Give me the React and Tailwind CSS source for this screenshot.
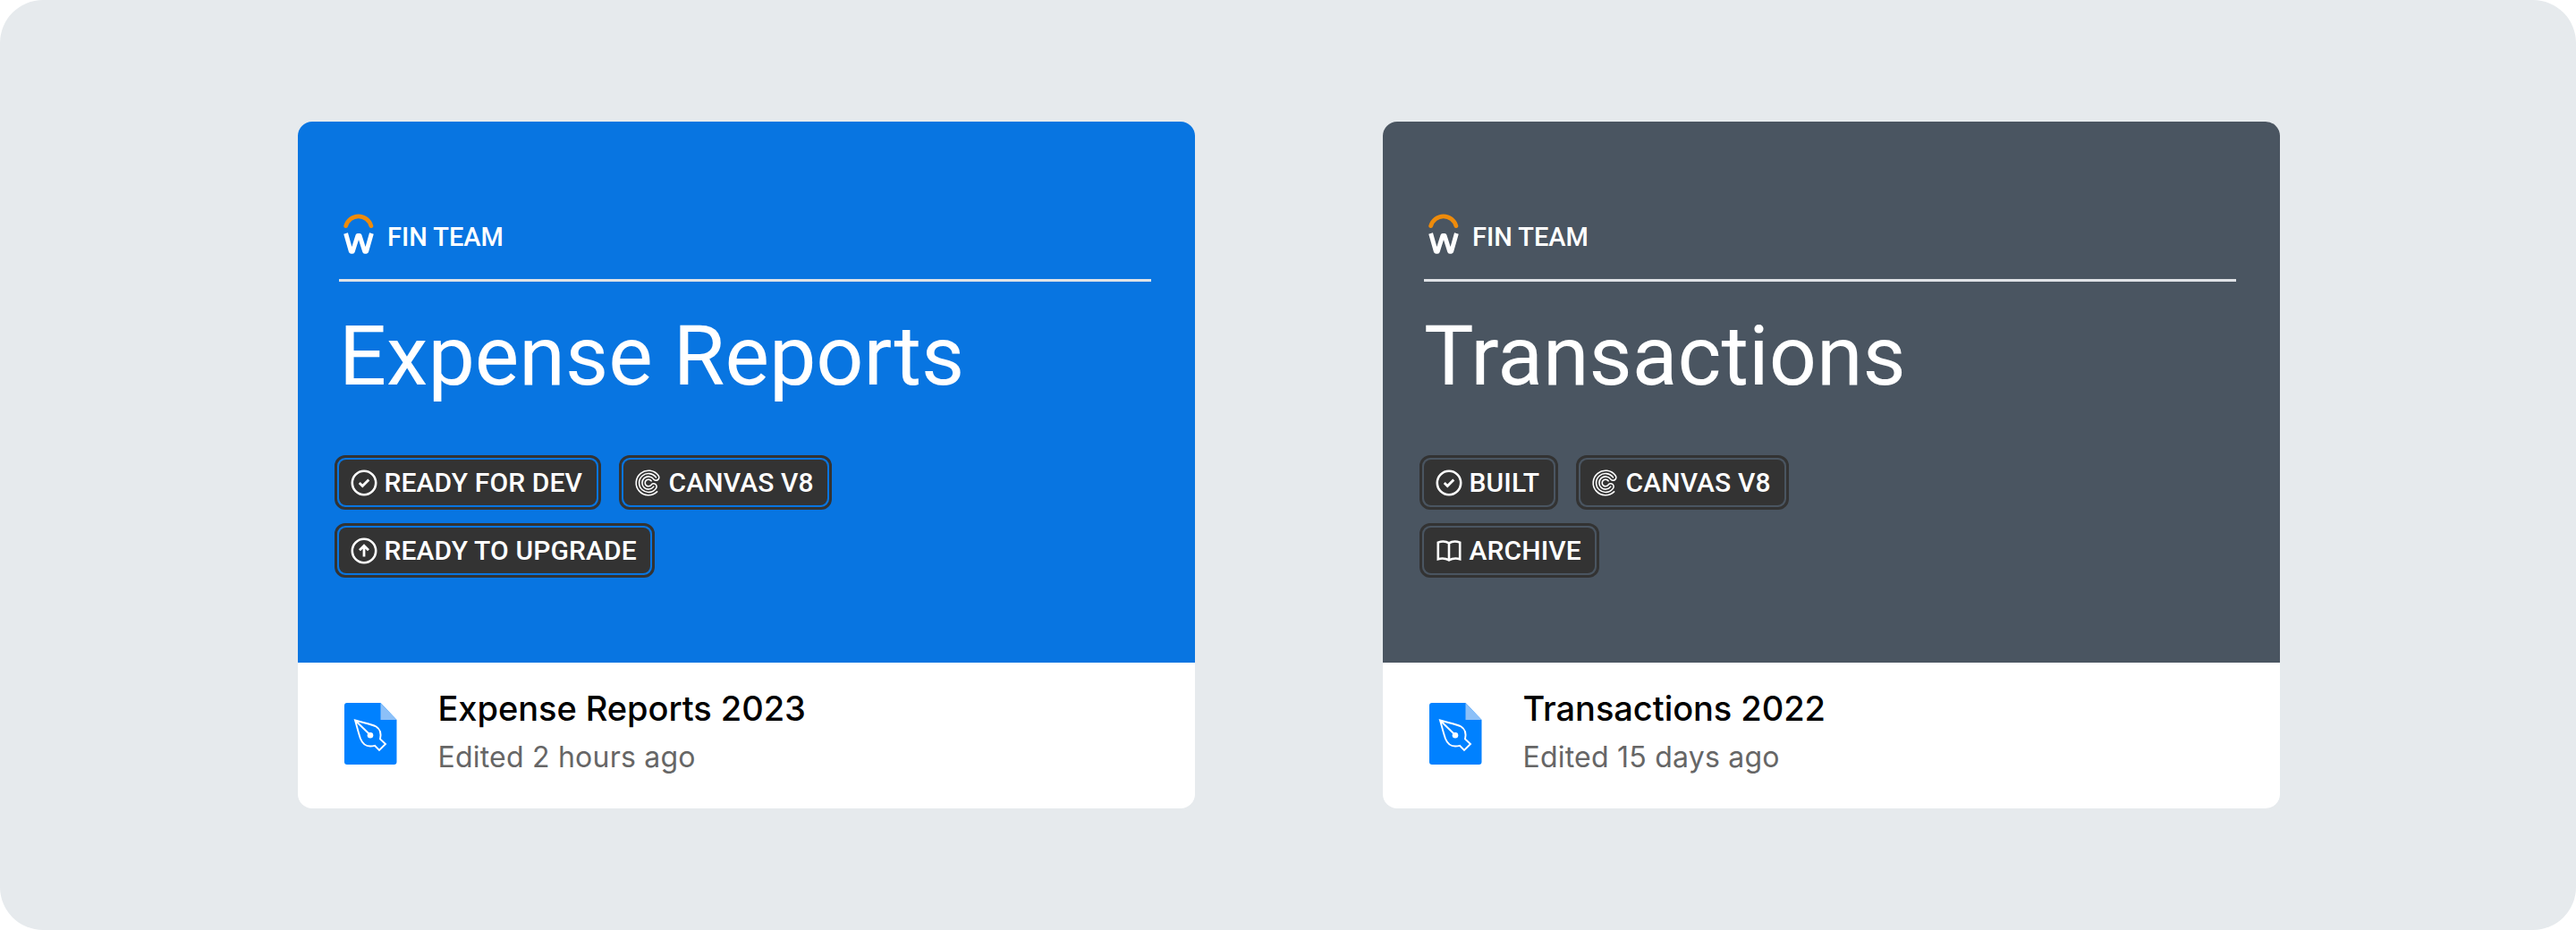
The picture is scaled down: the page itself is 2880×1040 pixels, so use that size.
import React from 'react';

const CARDS = [
  {
    team: 'FIN TEAM',
    title: 'Expense Reports',
    cover: 'bg-[#0875e1]',
    tags: [
      { icon: 'check', label: 'READY FOR DEV' },
      { icon: 'canvas', label: 'CANVAS V8' },
      { icon: 'upgrade', label: 'READY TO UPGRADE' },
    ],
    file: 'Expense Reports 2023',
    edited: 'Edited 2 hours ago',
  },
  {
    team: 'FIN TEAM',
    title: 'Transactions',
    cover: 'bg-[#4a5561]',
    tags: [
      { icon: 'check', label: 'BUILT' },
      { icon: 'canvas', label: 'CANVAS V8' },
      { icon: 'archive', label: 'ARCHIVE' },
    ],
    file: 'Transactions 2022',
    edited: 'Edited 15 days ago',
  },
];

function Logo() {
  return (
    <svg width="34" height="46" viewBox="0 0 34 46" fill="none" className="shrink-0">
      <path d="M2.7 13.6a14.6 14.6 0 0 1 28.2 0" stroke="#ee8b0b" strokeWidth="4.8" strokeLinecap="round" />
      <path d="M2.6 22L8.3 42.2H10.3L15.9 24.4H18.1L23.7 42.2H25.7L31.4 22" stroke="#fff" strokeWidth="4.9" strokeLinejoin="round" />
    </svg>
  );
}

function TagIcon({ name }) {
  return (
    <svg width="32" height="32" viewBox="-16 -16 32 32" fill="none" stroke="#fff" strokeWidth="2.6" className="shrink-0">
      {name === 'check' && (
        <>
          <circle r="13.2" />
          <path d="M-5.2 0.1l3.5 3.5 7-7" strokeWidth="2.8" />
        </>
      )}
      {name === 'upgrade' && (
        <>
          <circle r="13.2" />
          <path d="M0 6.4V-5M-5 -0.7l5-5 5 5" strokeWidth="2.8" />
        </>
      )}
      {name === 'canvas' && (
        <g strokeWidth="1.6" strokeLinecap="round" transform="translate(1 0)">
          <path d="M9.6 9.9A13.8 13.8 0 1 1 11.1 -8.2A3.35 3.35 0 0 1 5.8 -4.1A7.1 7.1 0 1 0 5.8 4.1" />
          <path d="M8.5 -6.1A10.45 10.45 0 1 0 8.5 6.1A3.3 3.3 0 0 0 3.1 2.2A3.8 3.8 0 1 1 3.1 -2.2" />
        </g>
      )}
      {name === 'archive' && (
        <path d="M0 -8.6C-3.6 -11 -8 -11 -12.2 -9.4V9.2C-8 8 -3.6 8.4 0 10.4C3.6 8.4 8 8 12.2 9.2V-9.4C8 -11 3.6 -11 0 -8.6ZM0 -8.6V10" />
      )}
    </svg>
  );
}

function Tag({ icon, label }) {
  return (
    <div className="rounded-[12px] border-3 border-[#333] p-[2px]">
      <div className={`flex h-[51px] items-center rounded-[8px] bg-[#333] pr-[15.5px] pl-[11.5px] ${icon === 'canvas' ? 'gap-[7.5px]' : 'gap-[7px]'}`}>
        <TagIcon name={icon} />
        <span className="text-[30px] leading-none font-medium tracking-[0.13px] whitespace-nowrap text-white">{label}</span>
      </div>
    </div>
  );
}

function FileIcon() {
  return (
    <svg width="59" height="69" viewBox="0 0 59 69" className="shrink-0">
      <path d="M3 0H40.5L58.5 19V66a3 3 0 0 1-3 3H3a3 3 0 0 1-3-3V3a3 3 0 0 1 3-3Z" fill="#0081ff" />
      <path d="M40.5 0L58.5 19H40.5Z" fill="#8cc0f8" />
      <path
        d="M12 19.5C20 22 30 23.5 35.5 26.5C41 30 41.3 35 40 40.5L46 46L39 53L34 47.8C26 50 20.5 46.5 18 40C15.5 33 14 26 12 19.5ZM12 19.5L29 36"
        fill="none"
        stroke="#fff"
        strokeWidth="1.9"
      />
      <circle cx="29" cy="36.3" r="3.3" fill="#fff" />
    </svg>
  );
}

function Card({ card }) {
  return (
    <div className="flex h-[768px] w-[1003.5px] flex-col overflow-hidden rounded-[16px] bg-white">
      <div className={`h-[605px] pt-[103px] pr-[49.5px] pl-[46.5px] font-['Roboto',sans-serif] ${card.cover}`}>
        <div className="flex h-[46px] items-center gap-[15px] pl-[5px]">
          <Logo />
          <span className="pt-[6px] text-[29px] leading-none font-medium text-white">{card.team}</span>
        </div>
        <div className="mt-[27px] h-[3px] bg-[#dfe2e6]" />
        <h2 className="mt-[28px] text-[93.4px] leading-[110px] font-normal whitespace-nowrap text-white">{card.title}</h2>
        <div className="mt-[56px] -ml-[5px] flex w-[620px] flex-wrap gap-x-[20px] gap-y-[15px]">
          {card.tags.map((tag) => (
            <Tag key={tag.label} icon={tag.icon} label={tag.label} />
          ))}
        </div>
      </div>
      <div className="flex flex-1 items-start pt-[45px] pl-[52px] font-['Inter',sans-serif]">
        <FileIcon />
        <div className="-mt-[20px] ml-[46px] flex flex-col">
          <span className="text-[38px] leading-[52px] font-medium tracking-[-0.05px] text-black">{card.file}</span>
          <span className="mt-[7px] text-[32px] leading-[44px] tracking-[0.22px] text-[#666]">{card.edited}</span>
        </div>
      </div>
    </div>
  );
}

export default function App() {
  return (
    <div className="h-[1040px] w-[2880px] bg-white">
      <div className="flex h-full gap-[209.5px] rounded-[48px] bg-[#e6eaed] pt-[136px] pl-[332.5px]">
        {CARDS.map((card) => (
          <Card key={card.title} card={card} />
        ))}
      </div>
    </div>
  );
}
